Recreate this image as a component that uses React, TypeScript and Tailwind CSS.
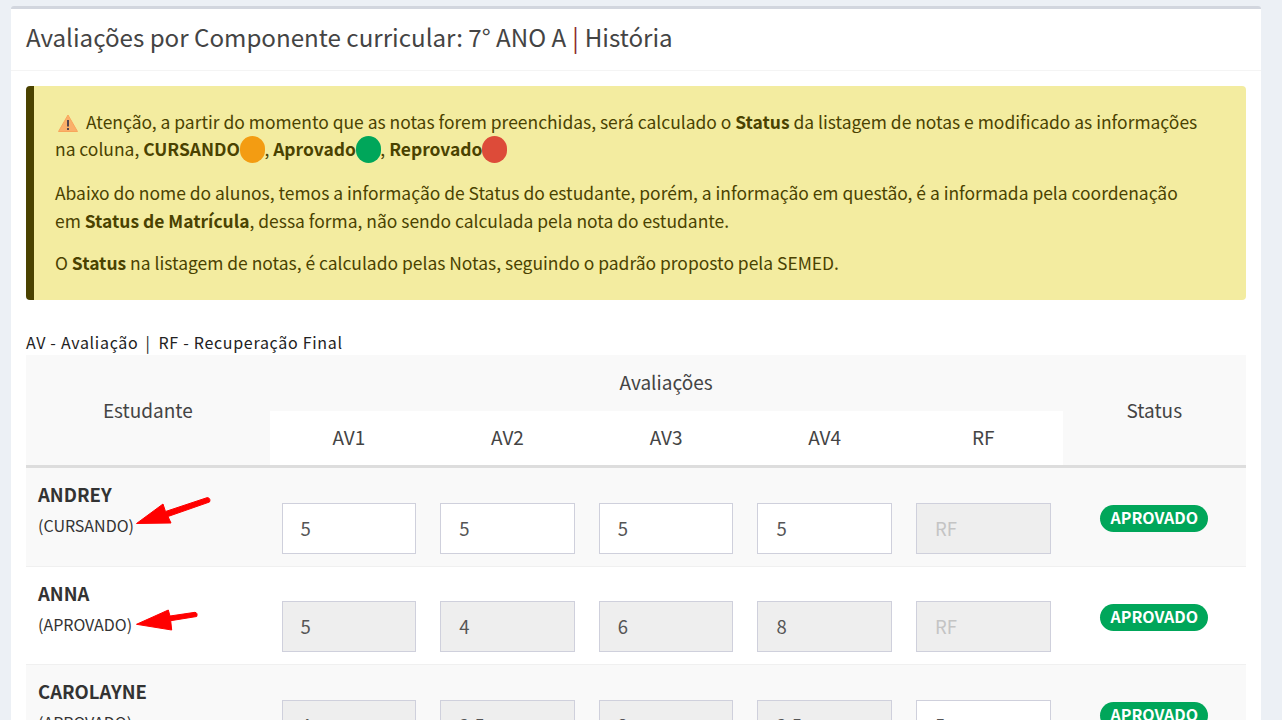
const font = { fontFamily: '"Noto Sans CJK SC", "Noto Sans", sans-serif' };

function Arrow({ points, className }: { points: string; className: string }) {
  return (
    <svg className={className} width="80" height="36" viewBox="0 0 80 36">
      <path d={points} fill="#ff0000" stroke="#ff0000" strokeWidth="1" strokeLinejoin="round" />
    </svg>
  );
}

function Cell({ value, disabled, ph, pad, inner }: { value?: string; disabled?: boolean; ph?: boolean; pad: string; inner: string }) {
  return (
    <td className={`px-3 pb-[12px] align-top ${pad}`}>
      <div
        className={`h-[51px] border border-[#cfd0dc] pl-[18px] flex items-center text-[18.5px] ${inner} ${
          disabled ? "bg-[#eeeeee]" : "bg-white"
        } ${ph ? "text-[#c4c4c4]" : "text-[#555555]"}`}
      >
        {value}
      </div>
    </td>
  );
}

function Row({
  name,
  status,
  cells,
  bg,
  arrow,
  pad,
  inner,
}: {
  name: string;
  status: string;
  cells: { v: string; d: boolean; p?: boolean }[];
  bg: string;
  arrow?: React.ReactNode;
  pad: string;
  inner: string;
}) {
  return (
    <tr className={`${bg} border-b border-[#f0f0f0]`}>
      <td className="pl-3 pt-[13px] align-top relative">
        <div className="text-[18.5px] font-bold leading-[26px] text-[#333333]">{name}</div>
        <div className="text-[16px] leading-[26px] mt-[5px] text-[#333333]">{status}</div>
        {arrow}
      </td>
      {cells.map((c, i) => (
        <Cell key={i} value={c.v} disabled={c.d} ph={c.p} pad={pad} inner={inner} />
      ))}
      <td className="align-top text-center pt-[37px]">
        <span className="inline-block w-[108px] h-[27px] rounded-full bg-[#00a65a] text-white font-bold text-[16px] leading-[25px]">
          APROVADO
        </span>
      </td>
    </tr>
  );
}

export default function App() {
  return (
    <div className="h-[720px] overflow-hidden bg-[#ecf0f5] px-[11px] pt-[6px] text-[#333333]" style={font}>
      <div className="w-[1250px] bg-white border-t-[3px] border-[#d2d6de] rounded-t-[3px] min-h-[720px]">
        <div className="h-[62px] border-b border-[#f4f4f4] pl-[15px] flex items-center text-[24.15px] text-[#444444] pb-[5px]">
          Avaliações por Componente curricular: 7° ANO A <span className="text-[#8a2b2b] mx-[6px]">|</span> História
        </div>
        <div className="px-[15px] pt-[15px]">
          <div className="h-[214px] bg-[#f3eca0] border-l-[8px] border-[#4a4200] rounded-[4px] pl-[21px] pr-[43px] pt-[22px] text-[#4a4200] text-[17.45px] leading-[28px]">
            <p className="leading-[27px]">
              <svg className="inline-block align-[-3px] mr-[8px] ml-[3px]" width="20" height="18" viewBox="0 0 20 18">
                <path d="M10 1 L19.5 17.5 L0.5 17.5 Z" fill="#fab06a" stroke="#f8a65c" strokeLinejoin="round" />
                <rect x="9" y="6" width="2" height="6.5" fill="#55464e" />
                <rect x="9" y="14" width="2" height="2" fill="#55464e" />
              </svg>
              Atenção, a partir do momento que as notas forem preenchidas, será calculado o <b>Status</b> da listagem de notas e modificado as informações na coluna, <b>CURSANDO</b>
              <span className="inline-block w-[25px] h-[27px] -my-[3px] -mr-[0.5px] rounded-full bg-[#f39c12] align-[-4px]" />,{" "}
              <b>Aprovado</b>
              <span className="inline-block w-[25px] h-[27px] -my-[3px] -mr-[0.5px] rounded-full bg-[#00a65a] align-[-4px]" />,{" "}
              <b>Reprovado</b>
              <span className="inline-block w-[25px] h-[27px] -my-[3px] rounded-full bg-[#dd4b39] align-[-4px]" />
            </p>
            <p className="mt-[17px]">
              Abaixo do nome do alunos, temos a informação de Status do estudante, porém, a informação em questão, é a informada pela coordenação em <b>Status de Matrícula</b>, dessa forma, não sendo calculada pela nota do estudante.
            </p>
            <p className="mt-[14px]">
              O <b>Status</b> na listagem de notas, é calculado pelas Notas, seguindo o padrão proposto pela SEMED.
            </p>
          </div>
          <div className="mt-[31px] h-[24px] text-[16px] leading-[22px] tracking-[0.7px] text-[#222222]">
            AV - Avaliação<span className="ml-[7px] mr-[8px]">|</span>RF - Recuperação Final
          </div>
          <table className="w-[1220px] table-fixed border-collapse">
            <colgroup>
              <col className="w-[243.6px]" />
              <col className="w-[158.6px]" />
              <col className="w-[158.6px]" />
              <col className="w-[158.6px]" />
              <col className="w-[158.6px]" />
              <col className="w-[158.6px]" />
              <col className="w-[183.4px]" />
            </colgroup>
            <thead className="text-[19px] font-normal text-[#444444]">
              <tr className="h-[56px] bg-[#f9f9f9]">
                <th rowSpan={2} className="font-normal border-b-[3px] border-[#dddddd]">Estudante</th>
                <th colSpan={5} className="font-normal pb-[1px]">Avaliações</th>
                <th rowSpan={2} className="font-normal border-b-[3px] border-[#dddddd]">Status</th>
              </tr>
              <tr className="h-[55px] bg-white">
                <th className="font-normal border-b-[3px] border-[#dddddd] pb-[2px]">AV1</th>
                <th className="font-normal border-b-[3px] border-[#dddddd] pb-[2px]">AV2</th>
                <th className="font-normal border-b-[3px] border-[#dddddd] pb-[2px]">AV3</th>
                <th className="font-normal border-b-[3px] border-[#dddddd] pb-[2px]">AV4</th>
                <th className="font-normal border-b-[3px] border-[#dddddd] pb-[2px]">RF</th>
              </tr>
            </thead>
            <tbody>
              <Row
                name="ANDREY"
                status="(CURSANDO)"
                bg="bg-[#f9f9f9]"
                pad="pt-[35px]"
                inner="pt-[1px]"
                cells={[
                  { v: "5", d: false },
                  { v: "5", d: false },
                  { v: "5", d: false },
                  { v: "5", d: false },
                  { v: "RF", d: true, p: true },
                ]}
                arrow={<Arrow className="absolute left-[110px] top-[28px]" points="M0.5 27.5 L27 8 L29.5 15.5 L71.5 1.5 Q75 2.5 73.5 6 L32 20.5 L35 27 Z" />}
              />
              <Row
                name="ANNA"
                status="(APROVADO)"
                bg="bg-white"
                pad="pt-[34px]"
                inner="pt-[1px]"
                cells={[
                  { v: "5", d: true },
                  { v: "4", d: true },
                  { v: "6", d: true },
                  { v: "8", d: true },
                  { v: "RF", d: true, p: true },
                ]}
                arrow={<Arrow className="absolute left-[110px] top-[32px]" points="M0.5 25.3 L32.3 11 L34 17 L59 13.3 Q62 14 60.7 17.5 L34.7 21.7 L35.7 31 Z" />}
              />
              <Row
                name="CAROLAYNE"
                status="(APROVADO)"
                bg="bg-[#f9f9f9]"
                pad="pt-[35px]"
                inner="pt-[1px]"
                cells={[
                  { v: "4", d: true },
                  { v: "2,5", d: true },
                  { v: "3", d: true },
                  { v: "2,5", d: true },
                  { v: "5", d: false },
                ]}
              />
            </tbody>
          </table>
        </div>
      </div>
    </div>
  );
}
